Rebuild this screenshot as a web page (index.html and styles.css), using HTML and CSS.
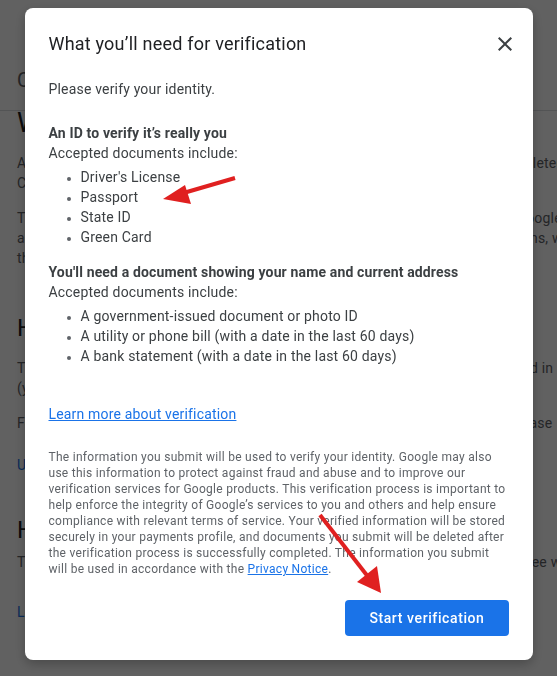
FILE: index.html
```html
<!DOCTYPE html>
<html lang="en">
<head>
    <meta charset="UTF-8">
    <meta name="viewport" content="width=device-width, initial-scale=1.0">
    <title>Verify your identity</title>
    <link rel="stylesheet" href="styles.css">
</head>
<body>
    <div class="page">
        <header class="page-header">
            <span class="page-title">Confirm your identity</span>
        </header>
        <main class="page-content">
            <h2 class="topic-title">Why am I being asked to verify my identity?</h2>
            <p class="topic-text">After you submit your documents, we will review them. The documents will be deleted<br>
                Contact us if you have any questions about the verification process.</p>
            <p class="topic-text">The ID documents you submit are only used to verify your identity and to keep Google<br>
                account holders safe, and to help protect them against any fraudulent transactions, which<br>
                the verification helps us prevent.</p>

            <h3 class="topic-subtitle">How to verify your identity</h3>
            <p class="topic-text topic-gap-sm">To verify this, upload a photo of your ID and a separate document that was issued in<br>
                (your name) with your current address.</p>
            <p class="topic-text">For all documents that are blurry, too dark or hard to read, we may ask you to please</p>
            <a class="topic-link" href="#">Upload documents</a>

            <h3 class="topic-subtitle topic-subtitle-last">How long does verification take?</h3>
            <p class="topic-text topic-gap-xs">The review usually takes up to 2 or 3 business days. Once it is all done, you will see whether</p>
            <a class="topic-link topic-link-last" href="#">Learn more</a>
        </main>
    </div>

    <div class="modal">
        <div class="dialog" role="dialog" aria-labelledby="dialogTitle">
            <div class="dialog-header">
                <h1 id="dialogTitle">What you’ll need for verification</h1>
                <button class="close-btn" aria-label="Close">
                    <svg viewBox="0 0 24 24" width="24" height="24">
                        <path d="M19 6.41L17.59 5 12 10.59 6.41 5 5 6.41 10.59 12 5 17.59 6.41 19 12 13.41 17.59 19 19 17.59 13.41 12z"/>
                    </svg>
                </button>
            </div>

            <p class="intro">Please verify your identity.</p>

            <section class="doc-group">
                <h3>An ID to verify it’s really you</h3>
                <p>Accepted documents include:</p>
                <ul>
                    <li>Driver's License</li>
                    <li>Passport</li>
                    <li>State ID</li>
                    <li>Green Card</li>
                </ul>
            </section>

            <section class="doc-group">
                <h3>You'll need a document showing your name and current address</h3>
                <p>Accepted documents include:</p>
                <ul>
                    <li>A government-issued document or photo ID</li>
                    <li>A utility or phone bill (with a date in the last 60 days)</li>
                    <li>A bank statement (with a date in the last 60 days)</li>
                </ul>
            </section>

            <a class="learn-more" href="#">Learn more about verification</a>

            <p class="legal">The information you submit will be used to verify your identity. Google may also use this information to protect against fraud and abuse and to improve our verification services for Google products. This verification process is important to help enforce the integrity of Google’s services to you and others and help ensure compliance with relevant terms of service. Your verified information will be stored securely in your payments profile, and documents you submit will be deleted after the verification process is successfully completed. The information you submit will be used in accordance with the <a href="#">Privacy Notice</a>.</p>

            <div class="dialog-actions">
                <button class="primary-btn">Start verification</button>
            </div>
        </div>

        <!-- annotation arrows -->
        <svg class="annotations" viewBox="0 0 557 676" width="557" height="676">
            <line x1="235" y1="178" x2="180" y2="194"/>
            <polygon points="163,199 185,185 191,204"/>
            <line x1="320" y1="515" x2="369" y2="578"/>
            <polygon points="381,593 357,582 377,566"/>
        </svg>
    </div>
</body>
</html>
```

FILE: styles.css
```css
* {
    margin: 0;
    padding: 0;
    box-sizing: border-box;
}

body {
    font-family: Roboto, 'Liberation Sans', sans-serif;
    background: #fff;
    color: #3c4043;
    overflow: hidden;
    width: 557px;
    height: 676px;
}

/* page behind the dialog */

.page {
    width: 900px;
}

.page-header {
    height: 111px;
    padding: 66px 17px 0;
    border-bottom: 1px solid #dadce0;
}

.page-title {
    font-size: 20px;
    line-height: 28px;
    color: #5f6368;
}

.page-content {
    padding: 0 17px;
}

.topic-title {
    font-size: 27px;
    line-height: 28px;
    font-weight: 400;
    color: #202124;
    margin-top: -2px;
}

.topic-text {
    font-size: 14px;
    line-height: 20px;
    letter-spacing: 0.2px;
    color: #5f6368;
    white-space: nowrap;
    margin-top: 15px;
}

.topic-title + .topic-text {
    margin-top: 16px;
}

.topic-subtitle {
    font-size: 24px;
    line-height: 32px;
    font-weight: 400;
    color: #202124;
    margin-top: 44px;
}

.topic-subtitle-last {
    margin-top: 39px;
}

.topic-gap-sm {
    margin-top: 14px;
}

.topic-gap-xs {
    margin-top: 6px;
}

.topic-link {
    display: block;
    font-size: 14px;
    line-height: 20px;
    color: #1a73e8;
    text-decoration: none;
    margin-top: 22px;
}

.topic-link-last {
    margin-top: 30px;
}

/* modal */

.modal {
    position: fixed;
    top: 0;
    left: 0;
    width: 100%;
    height: 100%;
    background: rgba(0, 0, 0, 0.62);
    display: flex;
    justify-content: center;
    align-items: flex-start;
    padding-top: 8px;
}

.dialog {
    width: 508px;
    background: #fff;
    border-radius: 8px;
    padding: 24px;
    box-shadow: 0 4px 12px rgba(0, 0, 0, 0.25);
}

.dialog-header {
    display: flex;
    justify-content: space-between;
    align-items: center;
    height: 24px;
}

.dialog-header h1 {
    font-size: 18px;
    line-height: 24px;
    font-weight: 400;
    letter-spacing: 0.2px;
    color: #202124;
}

.close-btn {
    width: 24px;
    height: 24px;
    margin-right: -8px;
    border: none;
    background: none;
    cursor: pointer;
    display: flex;
}

.close-btn svg {
    fill: #3c4043;
}

.intro {
    margin-top: 23px;
    font-size: 14px;
    line-height: 20px;
    letter-spacing: 0.18px;
}

.doc-group {
    margin-top: 24px;
    font-size: 14px;
    line-height: 20px;
    letter-spacing: 0.18px;
}

.doc-group + .doc-group {
    margin-top: 15px;
}

.doc-group h3 {
    font-size: 14px;
    line-height: 20px;
    font-weight: 700;
    letter-spacing: 0.15px;
    color: #3c4043;
}

.doc-group ul {
    margin-top: 4px;
    padding-left: 32px;
}

.doc-group li::marker {
    color: #5f6368;
    font-size: 12px;
}

.learn-more {
    display: block;
    width: max-content;
    margin-top: 38px;
    font-size: 14px;
    line-height: 20px;
    letter-spacing: 0.18px;
    color: #1a73e8;
}

.legal {
    margin: 25px -2px 0 0;
    font-size: 12px;
    line-height: 16px;
    letter-spacing: 0.28px;
    color: #5f6368;
}

.legal a {
    color: #1a73e8;
}

.dialog-actions {
    display: flex;
    justify-content: flex-end;
    margin-top: 23px;
}

.primary-btn {
    height: 36px;
    padding: 0 24px;
    border: none;
    border-radius: 4px;
    background: #1a73e8;
    color: #fff;
    font-family: Roboto, 'Liberation Sans', sans-serif;
    font-size: 14px;
    font-weight: 500;
    letter-spacing: 0.6px;
    cursor: pointer;
}

.annotations {
    position: absolute;
    top: 0;
    left: 0;
    pointer-events: none;
}

.annotations line {
    stroke: #e02020;
    stroke-width: 4;
}

.annotations polygon {
    fill: #e02020;
}
```
